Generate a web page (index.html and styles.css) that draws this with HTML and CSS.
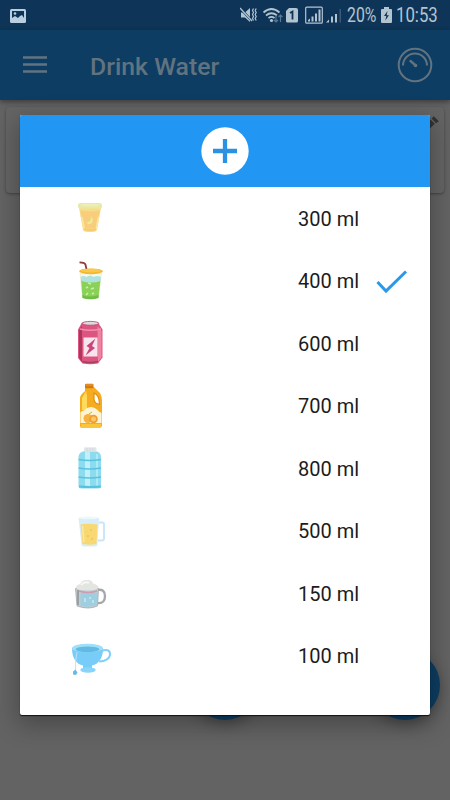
FILE: index.html
```html
<!DOCTYPE html>
<html lang="en">
<head>
<meta charset="utf-8">
<title>Drink Water</title>
<link rel="stylesheet" href="styles.css">
</head>
<body>
<div class="screen">
  <header class="status">
    <svg class="photo" viewBox="0 0 16 14"><rect width="16" height="14" rx="1.5" fill="#b9cfdf"/><path d="M2 2h12v7l-2-3-2 1-2 2-3-2-3 2z" fill="#0e3557"/><circle cx="5" cy="4.5" r="1.3" fill="#b9cfdf"/></svg>
    <svg class="signals" viewBox="0 0 104 20">
      <g fill="#b3c4d1">
        <path d="M1 7.500h4l5-4.500v14l-5-4.500H1z"/>
        <path d="M0 3l12 13" stroke="#0e3557" stroke-width="2.500"/><path d="M0 3l12 13" stroke="#b3c4d1" stroke-width="1.300"/>
        <path d="M13.500 3.500l-1 2 1 2-1 2 1 2-1 2 1 2M16.200 3.500l-1 2 1 2-1 2 1 2-1 2 1 2" fill="none" stroke="#b3c4d1" stroke-width="1.200"/>
        <path d="M23.500 7.500q8-7 16 0M26 10.500q5.500-4.500 11 0M28.500 13.200q3-2.500 6 0" fill="none" stroke="#b3c4d1" stroke-width="1.700"/><circle cx="31.500" cy="15.500" r="1.600"/>
        <path d="M36 10v7m-2-2 2 2 2-2M40.500 17v-7m-2 2 2-2 2 2" fill="none" stroke="#587894" stroke-width="1.200"/>
        <path d="M49 3h7q2 0 2 2v11q0 1.500-1.500 1.500h-9Q46 17.500 46 16V6z"/>
        <path d="M50 8l2.500-1.500v8" stroke="#0e3557" stroke-width="1.800" fill="none"/>
        <rect x="65.700" y="2.200" width="16.600" height="16" rx="1" fill="none" stroke="#b3c4d1" stroke-width="1.200"/>
        <path d="M68 16.500v-1.500l2-1.500v3zM71.500 16.500v-5h2v5zM75 16.500v-8h2v8zM78.500 16.500v-12h2v12z"/>
        <path d="M86 17.500l3-3v3zM91 17.500v-6h2v6zM95 17.500V9h2v8.500z"/><path d="M99.500 17.500V4h1.500v13.500z" fill="#365a79"/>
      </g>
    </svg>
    <span class="percent">20%</span>
    <svg class="battery" viewBox="0 0 11 16"><path d="M3 0h5v2h2q1 0 1 1v12q0 1-1 1H1q-1 0-1-1V3q0-1 1-1h2z" fill="#b3c4d1"/><path d="M6.500 4L3 9h2.300l-1 4.500L8 8.200H5.700z" fill="#0e3557"/></svg>
    <span class="clock">10:53</span>
  </header>
  <nav class="appbar">
    <svg class="menu" viewBox="0 0 24 17"><path d="M0 1.400h24M0 8.500h24M0 15.600h24" stroke="#617380" stroke-width="2.500"/></svg>
    <h1>Drink Water</h1>
    <svg class="gauge" viewBox="0 0 36 36" fill="none" stroke="#617380"><circle cx="18" cy="18" r="16.300" stroke-width="2"/><path d="M6 18.500a12 12 0 0 1 24 0" stroke-width="2"/><path d="M13.500 14l5.300 4.500" stroke-width="2.400" stroke-linecap="round"/><circle cx="18.500" cy="18.500" r="1.800" fill="#617380" stroke="none"/></svg>
  </nav>
  <main class="content">
    <section class="card">
      <svg class="pencil" viewBox="0 0 18 18"><path d="M0 18v-4L9.500 4.500l4.300 4.300L4 18zM10.500 3.500l2.300-2.300 5 5-2.800 2z" fill="#333"/></svg>
    </section>
  </main>
  <i class="fab fab-center"></i>
  <i class="fab fab-right"></i>

  <section class="dialog">
    <div class="dialog-head">
      <svg class="add" viewBox="0 0 48 48"><circle cx="24" cy="24" r="23.700" fill="#fff"/><path d="M12 24h24M24 12v24" stroke="#2b91e3" stroke-width="4.300"/></svg>
    </div>
    <ul class="sizes">
      <li>
        <svg class="drink" viewBox="0 0 70 62.5"><path d="M19 21h22l-4 22q-.5 2-7 2t-7-2z" fill="#f8dc86"/><path d="M20.500 23.500q9.500 2 19 0l-3 17q-6 2-13 0z" fill="#f8cd7c"/><path d="M22 30l2.500 13M38.500 30L36 43" stroke="#f9e6a0" stroke-width="1.500"/><path d="M24 42q6 2 12 0" stroke="#f6ca72" stroke-width="2" fill="none"/><rect x="18" y="16" width="24" height="5.500" rx="2.600" fill="#e5eaa5"/><ellipse cx="30" cy="18" rx="10" ry="1.300" fill="#f1edb9"/><path d="M31 29q4 6-1 8-3 1-3-2 4 1 4-6z" fill="#e9ed98"/></svg>
        <span>300 ml</span>
      </li>
      <li>
        <svg class="drink" viewBox="0 0 70 62.5"><path d="M19.500 12.300q5.500 0 6 2.500l1 4.500" fill="none" stroke="#8d3b38" stroke-width="1.800"/><path d="M20 23h21.500l-3 25q-8 2.500-16 0z" fill="#f5f9e9" stroke="#e9e9c9" stroke-width=".7"/><path d="M21 29q9 4 19.500 0l-2 18.500q-8 2.500-16 0z" fill="#8bd158"/><path d="M22.500 45q7 3 16 0v3q-8 2.500-16 0z" fill="#6dbd47"/><path d="M20.500 27q3-2 6 0 4-3 7 0 4-2 7.500 0l-.5 4q-9 3-19 0z" fill="#afe3e0"/><ellipse cx="31" cy="21.300" rx="12" ry="2.900" fill="#f6b62f"/><ellipse cx="31" cy="20.600" rx="10.500" ry="1.800" fill="#fac84a"/><path d="M26 38l2-1m3 2 3-1m-8 7 2-2m4 1 2-1m-6-10 3 1" stroke="#c7efad" stroke-width="1.600"/></svg>
        <span>400 ml</span>
        <svg class="check" viewBox="0 0 32 24"><path d="M1.500 12l8.500 9L30 1.500" fill="none" stroke="#2b98ea" stroke-width="3"/></svg>
      </li>
      <li>
        <svg class="drink" viewBox="0 0 70 62.5"><path d="M22 10.500h16l4.500 7v28L38 51.500q-8 1.500-15.500 0L18 46V17.500z" fill="#dc5580"/><path d="M19 18v28l3 4V14z" fill="#ad365d"/><path d="M37.500 14l4 5v26l-3.500 5z" fill="#ee83a1"/><ellipse cx="30.500" cy="11.300" rx="8.300" ry="1.900" fill="#e4d8df" stroke="#a84868" stroke-width=".8"/><path d="M20 17q10 2.500 21 0" stroke="#f28eac" fill="none" stroke-width="1.500"/><path d="M22.500 49.500q7 2 15.500 0" stroke="#a63e60" stroke-width="1.600" fill="none"/><path d="M23.500 25.500h14v19h-14z" fill="#f8e4ed"/><path d="M35.500 26.500l-9 7.500 3 2-4 7.500 9.500-7.500-3-2z" fill="#c94778"/></svg>
        <span>600 ml</span>
      </li>
      <li>
        <svg class="drink" viewBox="0 0 70 62.5"><path d="M25 12h9l6 6q2 3 2 7v26q-1 2-3 2H22q-2 0-2-2V23q0-3 5-7z" fill="#f6ac20"/><path d="M26 16l-4 7v12h5V21z" fill="#ffda5c"/><path d="M34 18q5.500 2 5.500 11.500-5-1-5.500-5z" fill="#fff" stroke="#de910d" stroke-width="1.200"/><path d="M20.500 37l4-2q7-7 15 2l2 1v10H20.500z" fill="#fff3d5"/><path d="M21 49h20v3q-1 1-2 1H22q-1 0-1-1z" fill="#fac536"/><circle cx="28" cy="43.500" r="4.500" fill="#f7b242"/><circle cx="33.500" cy="44" r="4.300" fill="#ef9d2c"/><circle cx="33.500" cy="44" r="2.500" fill="#fac66c"/><path d="M29 39l3-2" stroke="#a8bb49"/><rect x="25" y="8.800" width="8.500" height="4.500" rx="1" fill="#d27a13"/><path d="M25.500 10h7.500" stroke="#f0a13b"/></svg>
        <span>700 ml</span>
      </li>
      <li>
        <svg class="drink" viewBox="0 0 70 62.5"><path d="M25 14h10q6 1 6 6v29q0 2.500-3 2.500H21.500q-3 0-3-2.500V20q0-5 6.500-6z" fill="#8cdbee"/><path d="M25 15h5v34h-5z" fill="#c0f0fa"/><path d="M36 17h2v32h-2z" fill="#aee9f6"/><path d="M18.500 22.500q11 2 22.500 0M18.500 31q11 2 22.500 0M18.500 40q11 2 22.500 0" stroke="#58c3e0" stroke-width="1.700" fill="none"/><path d="M19 49.500q11 1 22 0" stroke="#55c2df" stroke-width="2" fill="none"/><rect x="24" y="10.300" width="12.500" height="4.500" rx="1" fill="#e1e7e9"/><path d="M27 11v3m3-3v3m3-3v3" stroke="#c9d1d5" stroke-width=".7"/></svg>
        <span>800 ml</span>
      </li>
      <li>
        <svg class="drink" viewBox="0 0 70 62.5"><path d="M38.500 22.500h4q1.500 0 1.500 2v14q0 2-2 2h-4" fill="none" stroke="#c9e7f7" stroke-width="2"/><path d="M18.500 18q10-2.500 20.500 0L37.500 45q-.5 1.500-3 1.500H24q-2 0-2.500-1.500z" fill="#d7eef8"/><path d="M20.500 24.500q8-1.500 17 0L36.500 44q-6 1.500-14 0z" fill="#f8d873"/><path d="M22.500 26l1.500 16" stroke="#fde89d" stroke-width="1.500"/><path d="M31 29v2m-3 4v2m4 1v2m-4-10" stroke="#f0c261" stroke-width="1.500"/><ellipse cx="28.800" cy="18" rx="9.500" ry="1.300" fill="#edf8fc"/></svg>
        <span>500 ml</span>
      </li>
      <li>
        <svg class="drink" viewBox="0 0 70 62.5"><path d="M37 28q8-1.500 8 6t-7 7" fill="none" stroke="#a6a7a9" stroke-width="2.300"/><path d="M15.500 26.500h23L37.500 44q-9 4-20.500 0z" fill="#c3cbd0" stroke="#a5a7aa" stroke-width=".8"/><path d="M20.500 31h17l-1 12q-7 3-16 1z" fill="#9dcfe1"/><path d="M18 28v15" stroke="#8b9096" stroke-width="1.500"/><path d="M19 29q9 3 18 0" stroke="#ce9bb1" stroke-width="1.600" fill="none"/><path d="M16 26q0-3 4-4 2-4.500 7-4 5-.5 6 3.500 5 1 5.500 4-1 3-11 3T16 26z" fill="#e3e5e1"/><path d="M21 23q4-4 8-2" stroke="#f7f7f4" stroke-width="2" fill="none"/><path d="M25 36v4m5-5v2m3 1v3" stroke="#c1e7f0" stroke-width="1.700"/></svg>
        <span>150 ml</span>
      </li>
      <li>
        <svg class="drink" viewBox="0 0 70 62.500"><path d="M41.500 26q9-3 8.500 4-1 6-11 6.500" fill="none" stroke="#82d0fa" stroke-width="2"/><path d="M12 23q0 8 3 12 3 4.500 8 5.500v4h9v-4q5-1 8-5.500 3-4 3-12z" fill="#78cdf8"/><ellipse cx="28" cy="45" rx="7.700" ry="2.700" fill="#88d4fa"/><ellipse cx="27.500" cy="23" rx="15.500" ry="4.300" fill="#9fdffc"/><ellipse cx="27.500" cy="24.300" rx="12" ry="2.900" fill="#62b9e2"/><path d="M17 27q-2 9-1.500 18" stroke="#b9e5fa" fill="none"/><path d="M15.500 44.500l2 3-1.500 2.500-3-.5v-3z" fill="#69bce8"/></svg>
        <span>100 ml</span>
      </li>
    </ul>
  </section>
</div>
</body>
</html>
```
FILE: styles.css
```css
* { box-sizing: border-box; }
body { margin: 0; font-family: Roboto, sans-serif; }
svg { display: block; flex: none; }

.screen {
  position: relative;
  width: 450px;
  height: 800px;
  overflow: hidden;
  display: flex;
  flex-direction: column;
  background: #636363;
}
.status {
  flex: none;
  height: 30px;
  display: flex;
  align-items: center;
  padding: 1px 12px 0 10px;
  background: #0e3557;
  color: #b3c4d1;
  font-size: 19.5px;
  line-height: 30px;
}
.photo { width: 16px; height: 14px; }
.signals { width: 104px; height: 20px; margin-left: 214px; margin-top: -2px; }
.percent { width: 31px; margin-left: 3px; white-space: nowrap; transform: scaleX(.81); transform-origin: left; }
.battery { width: 11px; height: 16px; margin-left: 3px; margin-top: -1px; }
.clock { margin-left: 4px; transform: scaleX(.86); transform-origin: left; white-space: nowrap; }

.appbar {
  position: relative;
  flex: none;
  height: 70px;
  display: flex;
  align-items: center;
  padding: 0 17px 0 23px;
  background: #0d3d62;
  box-shadow: 0 2px 5px rgba(0, 0, 0, .4);
}
.menu { width: 24px; height: 17px; margin-top: -1px; }
.appbar h1 {
  margin: 2px auto 0 43px;
  font-size: 24.8px;
  font-weight: 500;
  color: #617380;
}
.gauge { width: 36px; height: 36px; }

.content { padding: 7px 6px; }
.card {
  height: 86px;
  display: flex;
  justify-content: flex-end;
  padding: 8px 5px;
  border-radius: 4px;
  background: #646464;
  box-shadow: 0 1px 3px rgba(0, 0, 0, .35);
}
.pencil { width: 18px; height: 18px; }

.fab {
  position: absolute;
  top: 650px;
  width: 70px;
  height: 70px;
  border-radius: 50%;
  background: #0d3d62;
  box-shadow: 0 4px 14px rgba(0, 0, 0, .3);
}
.fab-center { left: 190px; }
.fab-right { left: 370px; }

.dialog {
  position: absolute;
  left: 20px;
  top: 115px;
  width: 410px;
  height: 600px;
  overflow: hidden;
  border-radius: 2px;
  background: #fff;
  box-shadow: 0 1px 1px #111, 0 8px 24px 2px rgba(0, 0, 0, .28);
}
.dialog-head {
  height: 72px;
  display: flex;
  justify-content: center;
  align-items: center;
  background: #2296f3;
}
.add { width: 48px; height: 48px; }
.sizes { margin: 0; padding: 0; list-style: none; }
.sizes li {
  height: 62.5px;
  display: flex;
  align-items: center;
  padding-left: 40px;
  color: #1c1c1c;
  font-size: 20px;
}
.drink { width: 70px; height: 62.5px; }
.sizes span { width: 78px; margin-left: 168px; padding-top: 1px; }
.check { width: 32px; height: 24px; margin-top: 3px; }
```
